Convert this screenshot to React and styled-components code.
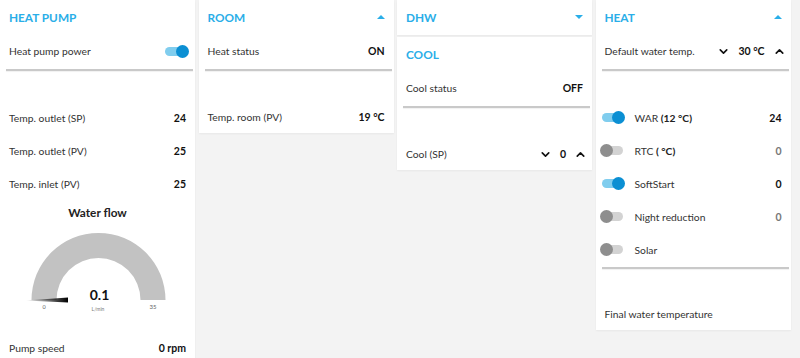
import React from "react"
import styled, { createGlobalStyle } from "styled-components"
import { ChevronDown, ChevronUp } from "lucide-react"

const GlobalStyle = createGlobalStyle`
  html, body {
    margin: 0;
    padding: 0;
    background: #f3f3f3;
  }
  body {
    font-family: Lato, "Open Sans", sans-serif;
    color: #333;
  }
`

const Board = styled.div`
  display: grid;
  grid-template-columns: repeat(4, 195px);
  column-gap: 3.5px;
  align-items: start;
  height: 358px;
  overflow: hidden;
`

const Stack = styled.div`
  display: grid;
  row-gap: 2px;
`

const Card = styled.section`
  background: #fff;
  box-shadow: 0 1px 2px rgba(0, 0, 0, 0.05);
`

const Title = styled.header`
  height: 34px;
  display: flex;
  align-items: center;
  justify-content: space-between;
  padding: 0 9px;
  color: #2aaee8;
  font-weight: 700;
  font-size: 11.8px;
`

const Caret = styled.span`
  width: 0;
  height: 0;
  border-left: 4px solid transparent;
  border-right: 4px solid transparent;
  ${p =>
    p.$down
      ? "border-top: 4px solid #2aaee8;"
      : "border-bottom: 4px solid #2aaee8;"}
`

const Row = styled.div`
  height: ${p => p.$h || 33}px;
  display: flex;
  align-items: center;
  padding: 0 9px 0 ${p => p.$left || 9}px;
  font-size: 10.3px;
  color: #333;
`

const Label = styled.span`
  flex: 1;
  & b {
    font-weight: 700;
    color: #222;
  }
`

const Value = styled.span`
  font-weight: 700;
  font-size: 10.5px;
  color: ${p => (p.$muted ? "#777" : "#111")};
`

const Divider = styled.hr`
  display: block;
  height: 0;
  margin: 1px 2px 2px 6px;
  border: 0;
  border-top: 2px solid #c9c9c9;
  box-shadow: 0 1px 1px rgba(0, 0, 0, 0.06);
`

const Spacer = styled.div`
  height: ${p => p.$h}px;
`

const Stepper = styled.div`
  display: flex;
  align-items: center;
  gap: 8px;
  margin-right: -4px;
  color: #111;
  & svg {
    display: block;
  }
`

const Toggle = styled.span`
  position: relative;
  display: inline-block;
  width: 21px;
  height: 9px;
  border-radius: 5px;
  background: ${p => (p.$on ? "#80cdee" : "#d3d3d3")};
  margin-right: ${p => p.$gap || 0}px;
  &::after {
    content: "";
    position: absolute;
    top: -2px;
    left: ${p => (p.$on ? "10.5px" : "-1.5px")};
    width: 13px;
    height: 13px;
    border-radius: 50%;
    background: ${p => (p.$on ? "#0b8fd3" : "#8e8e8e")};
  }
`

const GaugeTitle = styled.div`
  height: 24px;
  display: flex;
  align-items: center;
  justify-content: center;
  font-size: 11.8px;
  font-weight: 700;
  color: #222;
`

const GaugeSvg = styled.svg`
  display: block;
  font-family: Lato, "Open Sans", sans-serif;
`

const Step = ({ value }) => (
  <Stepper>
    <ChevronDown size={13} strokeWidth={3} />
    <Value>{value}</Value>
    <ChevronUp size={13} strokeWidth={3} />
  </Stepper>
)

const Gauge = () => (
  <GaugeSvg width="195" height="107" viewBox="0 0 195 107">
    <defs>
      <linearGradient id="needle" x1="0" x2="1" y1="0" y2="0">
        <stop offset="0" stopColor="#000" stopOpacity="0.05" />
        <stop offset="1" stopColor="#000" />
      </linearGradient>
    </defs>
    <path
      d="M 31.5 76 A 67 67 0 0 1 165.5 76 L 140.5 76 A 42 42 0 0 0 56.5 76 Z"
      fill="#c2c2c2"
    />
    <polygon points="26,76.5 68,73.5 68,78.5" fill="url(#needle)" />
    <text x="99.5" y="76" textAnchor="middle" fontSize="14" fontWeight="700" fill="#111">
      0.1
    </text>
    <text x="98" y="86.5" textAnchor="middle" fontSize="5" fill="#777">
      L/min
    </text>
    <text x="44" y="85" textAnchor="middle" fontSize="5.5" fill="#666">
      0
    </text>
    <text x="153" y="85" textAnchor="middle" fontSize="6" fill="#666">
      35
    </text>
  </GaugeSvg>
)

const heatRows = [
  { on: true, label: <>WAR <b>(12 °C)</b></>, value: "24" },
  { on: false, label: <>RTC <b>( °C)</b></>, value: "0", muted: true },
  { on: true, label: "SoftStart", value: "0" },
  { on: false, label: "Night reduction", value: "0", muted: true },
  { on: false, label: "Solar" },
]

export default function App() {
  return (
    <>
      <GlobalStyle />
      <Board>
        <Card>
          <Title>HEAT PUMP</Title>
          <Row $h={34}>
            <Label>Heat pump power</Label>
            <Toggle $on />
          </Row>
          <Divider />
          <Spacer $h={28} />
          <Row>
            <Label>Temp. outlet (SP)</Label>
            <Value>24</Value>
          </Row>
          <Row>
            <Label>Temp. outlet (PV)</Label>
            <Value>25</Value>
          </Row>
          <Row>
            <Label>Temp. inlet (PV)</Label>
            <Value>25</Value>
          </Row>
          <GaugeTitle>Water flow</GaugeTitle>
          <Gauge />
          <Row>
            <Label>Pump speed</Label>
            <Value>0 rpm</Value>
          </Row>
        </Card>

        <Card>
          <Title>
            ROOM <Caret />
          </Title>
          <Row $h={34}>
            <Label>Heat status</Label>
            <Value>ON</Value>
          </Row>
          <Divider />
          <Spacer $h={28} />
          <Row $h={32}>
            <Label>Temp. room (PV)</Label>
            <Value>19 °C</Value>
          </Row>
        </Card>

        <Stack>
          <Card>
            <Title>
              DHW <Caret $down />
            </Title>
            <Spacer $h={1} />
          </Card>
          <Card>
            <Title>COOL</Title>
            <Row $h={34}>
              <Label>Cool status</Label>
              <Value>OFF</Value>
            </Row>
            <Divider />
            <Spacer $h={28} />
            <Row $h={32}>
              <Label>Cool (SP)</Label>
              <Step value="0" />
            </Row>
          </Card>
        </Stack>

        <Card>
          <Title>
            HEAT <Caret />
          </Title>
          <Row $h={34}>
            <Label>Default water temp.</Label>
            <Step value="30 °C" />
          </Row>
          <Divider />
          <Spacer $h={28} />
          {heatRows.map((r, i) => (
            <Row key={i} $left={6}>
              <Toggle $on={r.on} $gap={12} />
              <Label>{r.label}</Label>
              {r.value && <Value $muted={r.muted}>{r.value}</Value>}
            </Row>
          ))}
          <Divider />
          <Spacer $h={27} />
          <Row $h={32}>
            <Label>Final water temperature</Label>
          </Row>
        </Card>
      </Board>
    </>
  )
}
